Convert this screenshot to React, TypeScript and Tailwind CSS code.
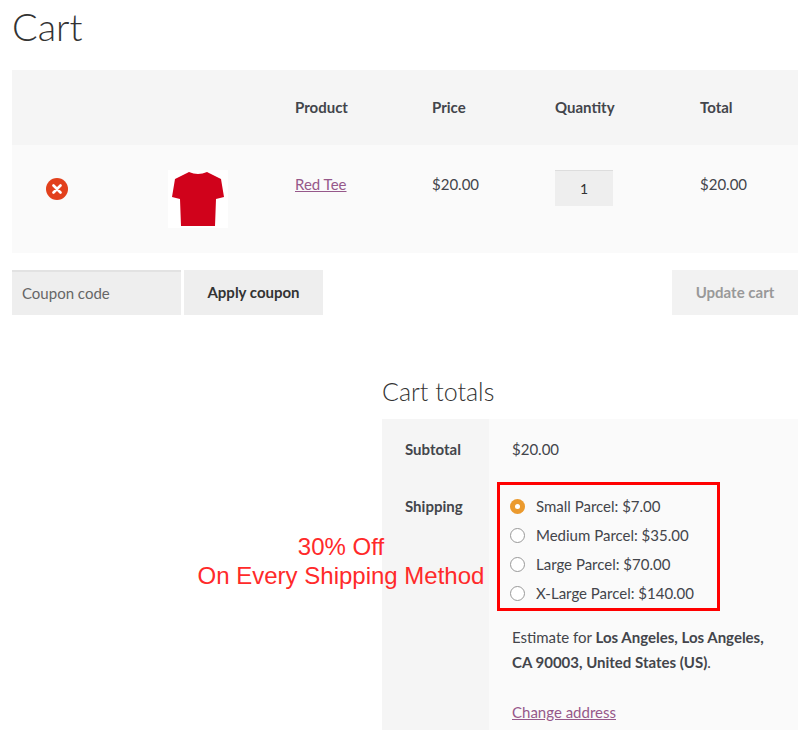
export default function App() {
  const f = { fontFamily: 'Lato, "Open Sans", sans-serif' };
  const radios = ["Small Parcel: $7.00", "Medium Parcel: $35.00", "Large Parcel: $70.00", "X-Large Parcel: $140.00"];
  return (
    <div className="w-[810px] h-[730px] overflow-hidden bg-white text-[#43454b] relative" style={f}>
      <h1 className="text-[38px] font-light leading-none pl-[12px] pt-[7px] h-[70px] text-[#333]">Cart</h1>
      <div className="mx-[12px]">
        <div className="flex h-[75px] items-center bg-[#f5f5f5] text-[15px] font-bold text-[#43454b]">
          <div className="w-[283px]" />
          <div className="w-[137px]">Product</div>
          <div className="w-[123px]">Price</div>
          <div className="w-[145px]">Quantity</div>
          <div>Total</div>
        </div>
        <div className="flex h-[108px] bg-[#fafafa] text-[15px] pt-[28px]">
          <div className="w-[88px] flex justify-center pt-[5px] pl-[1px]">
            <div className="w-[22px] h-[22px] rounded-full bg-[#e2401c] flex items-center justify-center">
              <svg width="10" height="10" viewBox="0 0 10 10"><path d="M1.5 1.5L8.5 8.5M8.5 1.5L1.5 8.5" stroke="white" strokeWidth="2.6" strokeLinecap="round" /></svg>
            </div>
          </div>
          <div className="w-[195px] pl-[68px] -mt-[3px]">
            <div className="w-[60px] h-[58px] bg-white flex items-center justify-center">
              <svg width="52" height="58" viewBox="0 0 52 58"><path d="M17 2 Q26 6 35 2 L49 9 L52 27 L44 29 L43 56 L9 56 L8 29 L0 27 L3 9 Z" fill="#d0021b" /></svg>
            </div>
          </div>
          <div className="w-[137px]"><span className="underline text-[#96588a]">Red Tee</span></div>
          <div className="w-[123px]">$20.00</div>
          <div className="w-[145px]">
            <div className="w-[58px] h-[36px] bg-[#eeeeee] border-t border-[#ddd] flex items-center justify-center text-[14px] -mt-[3px] text-[#333]">1</div>
          </div>
          <div>$20.00</div>
        </div>
        <div className="flex mt-[17px] h-[45px] text-[15px]">
          <div className="w-[169px] bg-[#eeeeee] border-t-2 border-[#e2e2e2] flex items-center pl-[10px] text-[#666]">Coupon code</div>
          <div className="w-[139px] ml-[3px] bg-[#eeeeee] flex items-center justify-center font-bold text-[#333]">Apply coupon</div>
          <div className="flex-1" />
          <div className="w-[126px] bg-[#f2f2f2] flex items-center justify-center font-bold text-[#999]">Update cart</div>
        </div>
      </div>
      <div className="ml-[382px] mt-[58px] w-[416px]">
        <h2 className="text-[25px] font-light text-[#333] h-[46px]">Cart totals</h2>
        <div className="flex text-[15px]">
          <div className="w-[107px] bg-[#f5f5f5] font-bold pl-[23px]">
            <div className="h-[57px] pt-[19px]">Subtotal</div>
            <div className="h-[260px] pt-[19px]">Shipping</div>
          </div>
          <div className="flex-1 bg-[#fafafa]">
            <div className="h-[57px] pt-[19px] pl-[23px]">$20.00</div>
            <div className="pl-[8px] pt-[6px]">
              <div className="w-[223px] h-[129px] border-[3px] border-[#ff0000] pl-[10px] pt-[11px] flex flex-col gap-[9px]">
                {radios.map((r, i) => (
                  <div key={r} className="flex items-center h-[20px]">
                    {i === 0 ? (
                      <div className="w-[15px] h-[15px] rounded-full bg-[#eb9a2e] flex items-center justify-center"><div className="w-[5px] h-[5px] rounded-full bg-white" /></div>
                    ) : (
                      <div className="w-[15px] h-[15px] rounded-full border border-[#999] bg-white" />
                    )}
                    <span className="ml-[11px]">{r}</span>
                  </div>
                ))}
              </div>
              <div className="pl-[15px] pt-[14px] leading-[25px]">
                Estimate for <b>Los Angeles, Los Angeles,<br />CA 90003, United States (US)</b>.
              </div>
              <div className="pl-[15px] pt-[26px] underline text-[#96588a]">Change address</div>
            </div>
          </div>
        </div>
      </div>
      <div className="absolute left-[186px] top-[532px] w-[310px] text-center text-[#ff2a2a] text-[24px] leading-[29px]" style={{ fontFamily: '"Liberation Sans", Arial, sans-serif' }}>
        30% Off<br />On Every Shipping Method
      </div>
    </div>
  );
}
